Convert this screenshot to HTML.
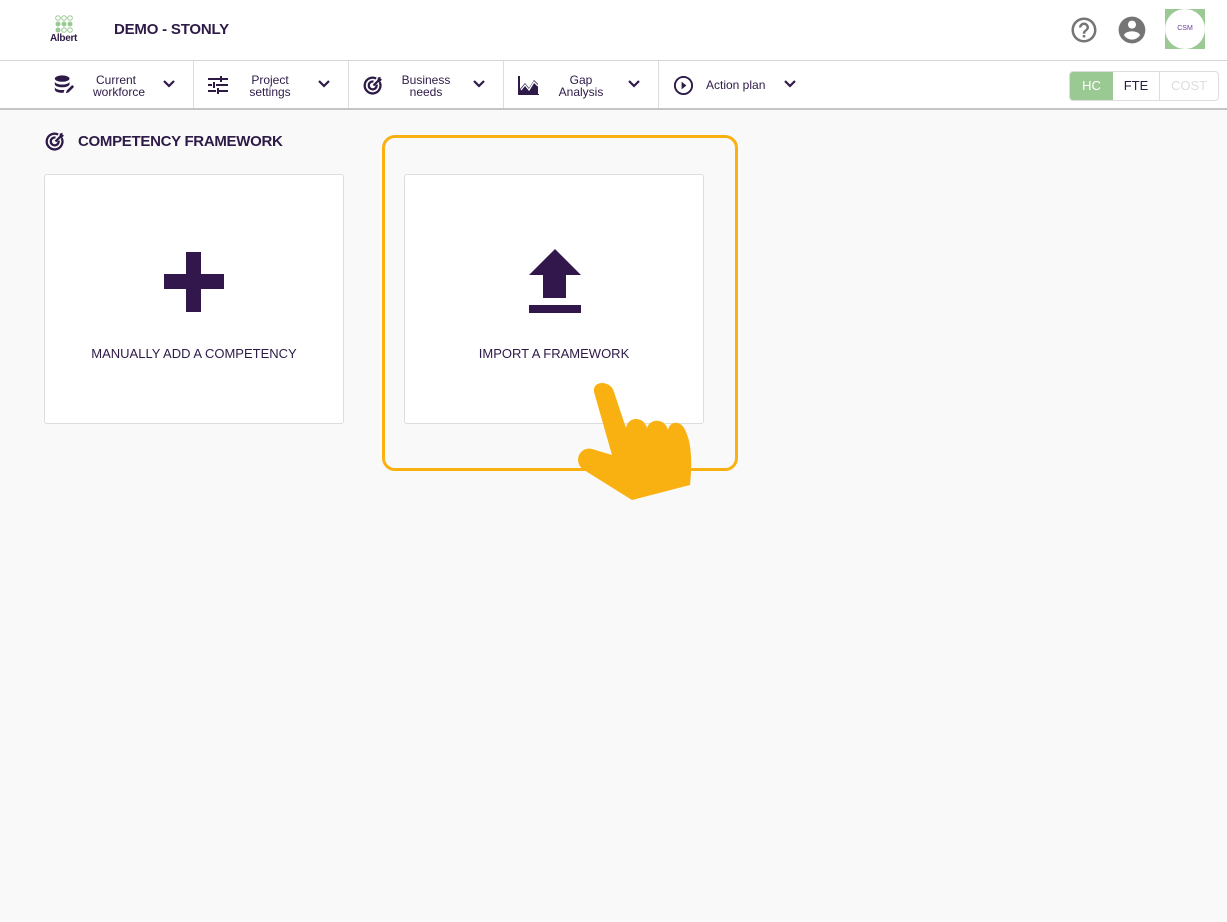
<!DOCTYPE html>
<html><head><meta charset="utf-8"><style>
*{box-sizing:border-box;margin:0;padding:0}
body{width:1227px;height:922px;background:#f9f9f9;font-family:"Liberation Sans",Arial,sans-serif;color:#2e1a47;position:relative;overflow:hidden}
.top{position:absolute;left:0;top:0;width:1227px;height:61px;background:#fff;border-bottom:1px solid #d6d6d6}
.nav{position:absolute;left:0;top:61px;width:1227px;height:49px;background:#fff;border-bottom:2px solid #c4c4c4}
.item{position:absolute;top:0;height:47px;display:flex;align-items:center;font-size:12px;line-height:12px;text-align:center;color:#2e1a47}
.sep{position:absolute;top:0;width:1px;height:47px;background:#ddd}
.abs{position:absolute}
.card{position:absolute;top:174px;width:300px;height:250px;background:#fff;border:1px solid #ddd;border-radius:3px}
.lbl{position:absolute;width:100%;text-align:center;font-size:13px;color:#2e1a47}
</style></head><body>
<div class="top">
  <svg class="abs" style="left:55px;top:15px" width="20" height="18" viewBox="0 0 20 18">
    <g fill="#9bc994"><circle cx="3" cy="3" r="2.3" fill="none" stroke="#9bc994" stroke-width="1"/><circle cx="9" cy="3" r="2.3" fill="none" stroke="#9bc994" stroke-width="1"/><circle cx="15" cy="3" r="2.3" fill="none" stroke="#9bc994" stroke-width="1"/>
    <circle cx="3" cy="9" r="2.5"/><circle cx="9" cy="9" r="2.5"/><circle cx="15" cy="9" r="2.5"/>
    <circle cx="3" cy="15" r="2.5"/><circle cx="9" cy="15" r="2.3" fill="none" stroke="#9bc994" stroke-width="1"/><circle cx="15" cy="15" r="2.3" fill="none" stroke="#9bc994" stroke-width="1"/></g></svg>
  <div class="abs" style="left:50px;top:33px;font-size:10px;font-weight:bold;letter-spacing:-0.3px">Albert</div>
  <div class="abs" style="left:114px;top:21px;font-size:15px;font-weight:bold;letter-spacing:-0.2px">DEMO - STONLY</div>
  <svg class="abs" style="left:1069px;top:15px" width="30" height="30" viewBox="0 0 24 24"><path fill="#757575" d="M11 18h2v-2h-2v2zm1-16C6.48 2 2 6.48 2 12s4.48 10 10 10 10-4.48 10-10S17.52 2 12 2zm0 18c-4.41 0-8-3.59-8-8s3.59-8 8-8 8 3.59 8 8-3.59 8-8 8zm0-14c-2.21 0-4 1.79-4 4h2c0-1.1.9-2 2-2s2 .9 2 2c0 2-3 1.75-3 5h2c0-2.25 3-2.5 3-5 0-2.21-1.79-4-4-4z"/></svg>
  <svg class="abs" style="left:1116px;top:14px" width="32" height="32" viewBox="0 0 24 24"><path fill="#757575" d="M12 2C6.48 2 2 6.48 2 12s4.48 10 10 10 10-4.48 10-10S17.52 2 12 2zm0 3c1.66 0 3 1.34 3 3s-1.34 3-3 3-3-1.34-3-3 1.34-3 3-3zm0 14.2c-2.5 0-4.71-1.28-6-3.22.03-1.99 4-3.08 6-3.08 1.99 0 5.97 1.09 6 3.08-1.29 1.94-3.5 3.22-6 3.22z"/></svg>
  <div class="abs" style="left:1165px;top:9px;width:40px;height:40px;background:#9bc994"><div style="width:40px;height:40px;border-radius:50%;background:#fff;font-size:7px;color:#6a3d9a;text-align:center;line-height:40px">CSM</div></div>
</div>
<div class="nav">
  <div class="item" style="left:53px"><svg width="22" height="22" viewBox="0 0 24 24"><g fill="#2e1a47"><ellipse cx="10" cy="5" rx="8" ry="3.5"/><path d="M2 8c0 2 3.5 3.5 8 3.5s8-1.5 8-3.5v3c0 2-3.5 3.5-8 3.5S2 13 2 11z"/><path d="M2 14c0 2 3.5 3.5 8 3.5 1 0 2 0 2.5-.2l-1 3.2c-.5 0-1 .1-1.5.1-4.5 0-8-1.5-8-3.5z"/><path d="M14 21l1-3 6-6 2 2-6 6z"/></g></svg></div>
  <div class="item" style="left:93px;top:13px;height:auto;display:block;width:46px">Current<br>workforce</div>
  <svg class="abs" style="left:162px;top:18px" width="14" height="10" viewBox="0 0 14 10"><path d="M2 2l5 5 5-5" stroke="#2e1a47" stroke-width="2.2" fill="none"/></svg>
  <div class="sep" style="left:193px"></div>
  <svg class="abs" style="left:208px;top:15px" width="20" height="18" viewBox="0 0 20 18"><g fill="#2e1a47"><rect x="0" y="2" width="12" height="2"/><rect x="14" y="2" width="6" height="2"/><rect x="12" y="0" width="2" height="6"/><rect x="0" y="8" width="4" height="2"/><rect x="8" y="8" width="12" height="2"/><rect x="5" y="6" width="2" height="6"/><rect x="0" y="14" width="8" height="2"/><rect x="11" y="14" width="9" height="2"/><rect x="9" y="12" width="2" height="6"/></g></svg>
  <div class="item" style="left:246px;top:13px;height:auto;display:block;width:48px">Project<br>settings</div>
  <svg class="abs" style="left:317px;top:18px" width="14" height="10" viewBox="0 0 14 10"><path d="M2 2l5 5 5-5" stroke="#2e1a47" stroke-width="2.2" fill="none"/></svg>
  <div class="sep" style="left:348px"></div>
  <svg class="abs" style="left:363px;top:14px" width="21" height="21" viewBox="0 0 24 24"><g fill="none" stroke="#2e1a47" stroke-width="2.6"><path d="M19 8A9 9 0 1 1 15 4"/><path d="M15.5 11A4.5 4.5 0 1 1 12 7.5"/><path d="M12 12l8-8"/></g><path d="M17 3l3-1v3l2 0-3 3h-3z" fill="#2e1a47"/></svg>
  <div class="item" style="left:398px;top:13px;height:auto;display:block;width:56px">Business<br>needs</div>
  <svg class="abs" style="left:472px;top:18px" width="14" height="10" viewBox="0 0 14 10"><path d="M2 2l5 5 5-5" stroke="#2e1a47" stroke-width="2.2" fill="none"/></svg>
  <div class="sep" style="left:503px"></div>
  <svg class="abs" style="left:518px;top:15px" width="21" height="19" viewBox="0 0 21 19"><path d="M1 0v19h20" stroke="#2e1a47" stroke-width="2" fill="none"/><path d="M2 18v-5l5-6 4 5 5-8 4 4v10z" fill="#2e1a47"/><path d="M3 14l4-5 4 5 5-8 4 4" stroke="#fff" stroke-width="1.3" fill="none"/></svg>
  <div class="item" style="left:555px;top:13px;height:auto;display:block;width:52px">Gap<br>Analysis</div>
  <svg class="abs" style="left:627px;top:18px" width="14" height="10" viewBox="0 0 14 10"><path d="M2 2l5 5 5-5" stroke="#2e1a47" stroke-width="2.2" fill="none"/></svg>
  <div class="sep" style="left:658px"></div>
  <svg class="abs" style="left:673px;top:14px" width="21" height="21" viewBox="0 0 22 22"><circle cx="11" cy="11" r="9" stroke="#2e1a47" stroke-width="2" fill="none"/><path d="M9 7l5 4-5 4z" fill="#2e1a47"/></svg>
  <div class="item" style="left:706px">Action plan</div>
  <svg class="abs" style="left:783px;top:18px" width="14" height="10" viewBox="0 0 14 10"><path d="M2 2l5 5 5-5" stroke="#2e1a47" stroke-width="2.2" fill="none"/></svg>
  <div class="abs" style="left:1069px;top:10px;width:150px;height:30px;border:1px solid #ddd;border-radius:4px;display:flex;overflow:hidden;font-size:13px">
    <div style="width:43px;background:#9bc994;color:#fff;text-align:center;line-height:28px">HC</div>
    <div style="width:47px;border-right:1px solid #ddd;color:#2e1a47;text-align:center;line-height:28px">FTE</div>
    <div style="flex:1;color:#ddd;text-align:center;line-height:28px">COST</div>
  </div>
</div>
<svg class="abs" style="left:45px;top:131px" width="21" height="21" viewBox="0 0 24 24"><g fill="none" stroke="#2e1a47" stroke-width="2.6"><path d="M19 8A9 9 0 1 1 15 4"/><path d="M15.5 11A4.5 4.5 0 1 1 12 7.5"/><path d="M12 12l8-8"/></g><path d="M17 3l3-1v3l2 0-3 3h-3z" fill="#2e1a47"/></svg>
<div class="abs" style="left:78px;top:133px;font-size:15px;font-weight:bold;letter-spacing:-0.3px">COMPETENCY FRAMEWORK</div>
<div class="card" style="left:44px">
  <div class="abs" style="left:119px;top:77px;width:60px;height:60px"><div class="abs" style="left:22px;top:0;width:15px;height:60px;background:#32174d"></div><div class="abs" style="left:0;top:22px;width:60px;height:15px;background:#32174d"></div></div>
  <div class="lbl" style="top:171px">MANUALLY ADD A COMPETENCY</div>
</div>
<div class="card" style="left:404px">
  <svg class="abs" style="left:123px;top:73px" width="54" height="65" viewBox="0 0 54 65"><path d="M27 1L53 27H38V50H15V27H1z" fill="#32174d"/><rect x="1" y="57" width="52" height="8" fill="#32174d"/></svg>
  <div class="lbl" style="top:171px">IMPORT A FRAMEWORK</div>
</div>
<div class="abs" style="left:382px;top:135px;width:356px;height:336px;border:3px solid #f9b111;border-radius:13px"></div>
<svg class="abs" style="left:560px;top:370px" width="140" height="140" viewBox="560 370 140 140"><path fill="#f9b111" d="M594 392L612 455L592 449C580 446 572 462 584 470L632 500L690 485C692 465 692 445 686 432C682 420 670 420 668 430C665 418 650 418 647 428C644 416 628 416 626 428L614 392C611 380 592 380 594 392Z"/></svg>
</body></html>
